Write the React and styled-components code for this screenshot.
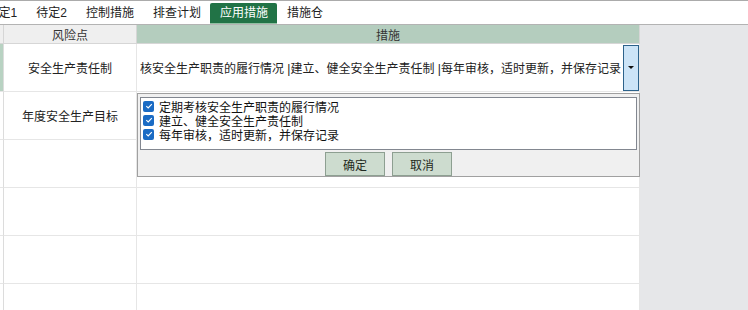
import React from "react";
import styled, { createGlobalStyle } from "styled-components";

const GlobalStyle = createGlobalStyle`
  html, body {
    margin: 0;
    height: 100%;
    overflow: hidden;
    background: #fff;
    font-family: "Liberation Sans", "Noto Sans CJK SC", sans-serif;
    font-size: 12px;
    color: #222;
  }
`;

const Page = styled.div`
  display: flex;
  flex-direction: column;
  height: 100vh;
  overflow: hidden;
`;

const TabBar = styled.div`
  display: flex;
  align-items: flex-end;
  height: 23px;
  border-top: 1px solid #ababab;
  border-bottom: 1px solid #b3b3b3;
  overflow: hidden;
`;

const TabList = styled.div`
  display: flex;
  margin-left: -23px;
`;

const Tab = styled.div`
  padding: 0 9.5px;
  height: 21px;
  line-height: 21px;
  white-space: nowrap;
  border-radius: 2px 2px 0 0;
  color: ${(p) => (p.$active ? "#fff" : "#222")};
  background: ${(p) => (p.$active ? "#217346" : "transparent")};
  box-shadow: ${(p) => (p.$active ? "inset 0 -1px 0 #8fbfa1" : "none")};
`;

const Sheet = styled.div`
  flex: 1;
  display: flex;
  min-height: 0;
  overflow: hidden;
`;

const Table = styled.div`
  position: relative;
  width: 640px;
  display: grid;
  grid-template-columns: 4px 133px 503px;
  grid-template-rows: 19px;
  grid-auto-rows: 48px;
  align-content: start;
`;

const Filler = styled.div`
  flex: 1;
  background: #e6e7e9;
`;

const HeadCell = styled.div`
  box-sizing: border-box;
  display: flex;
  align-items: center;
  justify-content: center;
  background: ${(p) => p.$bg || "#efefef"};
  border-right: 1px solid #d6d6d6;
  border-bottom: 1px solid #d6d6d6;
  color: #333;
`;

const RowHead = styled.div`
  box-sizing: border-box;
  background: ${(p) => (p.$selected ? "#b8d2c2" : "#fff")};
  border-right: 1px solid #dcdcdc;
  border-bottom: 1px solid #e6e6e6;
`;

const Cell = styled.div`
  box-sizing: border-box;
  display: flex;
  align-items: center;
  justify-content: ${(p) => (p.$center ? "center" : "flex-start")};
  padding-left: ${(p) => (p.$center ? "0" : "3px")};
  border-right: 1px solid #e6e6e6;
  border-bottom: 1px solid #e6e6e6;
  white-space: nowrap;
  overflow: hidden;
  color: #222;
`;

const CellText = styled.div`
  flex: 1;
  overflow: hidden;
`;

const DropButton = styled.div`
  box-sizing: border-box;
  flex: none;
  width: 16px;
  height: 46px;
  display: flex;
  align-items: center;
  justify-content: center;
  background: #cce4f7;
  border: 1px solid #2c628b;
  &::after {
    content: "";
    border-left: 3px solid transparent;
    border-right: 3px solid transparent;
    border-top: 3px solid #111;
  }
`;

const Popup = styled.div`
  position: absolute;
  left: 137px;
  top: 68px;
  width: 503px;
  height: 84px;
  box-sizing: border-box;
  padding: 3px 2px 0;
  background: #f0f0f0;
  border: 1px solid #a0a0a0;
  display: flex;
  flex-direction: column;
`;

const List = styled.div`
  box-sizing: border-box;
  height: 53px;
  padding: 1px 2px 0;
  background: #fff;
  border: 1px solid #828790;
`;

const Item = styled.div`
  display: flex;
  align-items: center;
  height: 14px;
  color: #111;
  white-space: nowrap;
`;

const Check = styled.span`
  flex: none;
  width: 11px;
  height: 11px;
  margin-right: 5px;
  border-radius: 2px;
  background: #1a6bc4;
  display: flex;
  align-items: center;
  justify-content: center;
`;

const Buttons = styled.div`
  display: flex;
  justify-content: center;
  gap: 7px;
  margin-top: 2px;
`;

const Button = styled.div`
  box-sizing: border-box;
  width: 60px;
  height: 24px;
  display: flex;
  align-items: center;
  justify-content: center;
  background: #cddccf;
  border: 1px solid #8d9f91;
  color: #1f2a22;
`;

const tabs = ["待定1", "待定2", "控制措施", "排查计划", "应用措施", "措施仓"];
const options = [
  "定期考核安全生产职责的履行情况",
  "建立、健全安全生产责任制",
  "每年审核，适时更新，并保存记录",
];
const rows = [
  { name: "安全生产责任制", value: "核安全生产职责的履行情况 |建立、健全安全生产责任制 |每年审核，适时更新，并保存记录", selected: true },
  { name: "年度安全生产目标", value: "" },
  { name: "", value: "" },
  { name: "", value: "" },
  { name: "", value: "" },
  { name: "", value: "" },
];

const CheckMark = () => (
  <svg width="8" height="8" viewBox="0 0 8 8">
    <path d="M1.3 4.2 L3.2 6 L6.8 2.2" fill="none" stroke="#fff" strokeWidth="1.1" />
  </svg>
);

export default function App() {
  return (
    <>
      <GlobalStyle />
      <Page>
        <TabBar>
          <TabList>
            {tabs.map((t) => (
              <Tab key={t} $active={t === "应用措施"}>{t}</Tab>
            ))}
          </TabList>
        </TabBar>
        <Sheet>
          <Table>
            <HeadCell />
            <HeadCell>风险点</HeadCell>
            <HeadCell $bg="#b4cdbe">措施</HeadCell>
            {rows.map((r, i) => (
              <React.Fragment key={i}>
                <RowHead $selected={r.selected} />
                <Cell $center>{r.name}</Cell>
                <Cell>
                  <CellText>{r.value}</CellText>
                  {r.selected && <DropButton />}
                </Cell>
              </React.Fragment>
            ))}
            <Popup>
              <List>
                {options.map((o) => (
                  <Item key={o}>
                    <Check><CheckMark /></Check>
                    {o}
                  </Item>
                ))}
              </List>
              <Buttons>
                <Button>确定</Button>
                <Button>取消</Button>
              </Buttons>
            </Popup>
          </Table>
          <Filler />
        </Sheet>
      </Page>
    </>
  );
}
